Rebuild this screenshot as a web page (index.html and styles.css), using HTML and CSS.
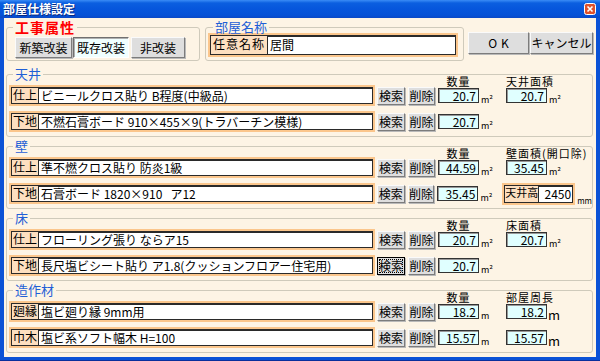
FILE: index.html
```html
<!DOCTYPE html>
<html lang="ja">
<head>
    <meta charset="UTF-8">
    <title>部屋仕様設定</title>
    <link rel="stylesheet" href="styles.css">
</head>
<body>
<div class="window">
    <div class="titlebar">
        <span class="title">部屋仕様設定</span>
        <span class="close">
            <svg width="12" height="12" viewBox="0 0 12 12">
                <rect x="0.5" y="0.5" width="11" height="11" rx="2" fill="#e0512a" stroke="#fff"/>
                <path d="M3.5 3.5 L8.5 8.5 M8.5 3.5 L3.5 8.5" stroke="#fff" stroke-width="1.6"/>
            </svg>
        </span>
    </div>
    <div class="client">
        <div class="top">
            <fieldset class="group kind">
                <legend class="red">工事属性</legend>
                <div class="kind-btns">
                    <button class="btn k1">新築改装</button>
                    <button class="btn k2 pressed">既存改装</button>
                    <button class="btn k3">非改装</button>
                </div>
            </fieldset>
            <fieldset class="group room">
                <legend>部屋名称</legend>
                <div class="item name"><span class="lbl">任意名称</span><span class="field">居間</span></div>
            </fieldset>
            <div class="dlg-btns">
                <button class="btn ok">OK</button>
                <button class="btn cancel">キャンセル</button>
            </div>
        </div>

        <fieldset class="group sec">
            <legend>天井</legend>
            <div class="heads"><span class="h1">数量</span><span class="h2">天井面積</span></div>
            <div class="row">
                <div class="item"><span class="lbl">仕上</span><span class="field">ビニールクロス貼り B程度(中級品)</span></div>
                <button class="btn sm">検索</button><button class="btn sm del">削除</button>
                <span class="val">20.7</span><span class="unit">m²</span>
                <span class="val">20.7</span><span class="unit">m²</span>
            </div>
            <div class="row">
                <div class="item"><span class="lbl">下地</span><span class="field">不燃石膏ボード 910×455×9(トラバーチン模様)</span></div>
                <button class="btn sm">検索</button><button class="btn sm del">削除</button>
                <span class="val">20.7</span><span class="unit">m²</span>
            </div>
        </fieldset>

        <fieldset class="group sec">
            <legend>壁</legend>
            <div class="heads"><span class="h1">数量</span><span class="h2">壁面積(開口除)</span></div>
            <div class="row">
                <div class="item"><span class="lbl">仕上</span><span class="field">準不燃クロス貼り 防炎1級</span></div>
                <button class="btn sm">検索</button><button class="btn sm del">削除</button>
                <span class="val">44.59</span><span class="unit">m²</span>
                <span class="val">35.45</span><span class="unit">m²</span>
            </div>
            <div class="row">
                <div class="item"><span class="lbl">下地</span><span class="field">石膏ボード 1820×910&nbsp;&nbsp; ア12</span></div>
                <button class="btn sm">検索</button><button class="btn sm del">削除</button>
                <span class="val">35.45</span><span class="unit">m²</span>
                <div class="item height"><span class="lbl">天井高</span><span class="field">2450</span></div>
                <span class="unit mm">mm</span>
            </div>
        </fieldset>

        <fieldset class="group sec">
            <legend>床</legend>
            <div class="heads"><span class="h1">数量</span><span class="h2">床面積</span></div>
            <div class="row">
                <div class="item"><span class="lbl">仕上</span><span class="field">フローリング張り ならア15</span></div>
                <button class="btn sm">検索</button><button class="btn sm del">削除</button>
                <span class="val">20.7</span><span class="unit">m²</span>
                <span class="val">20.7</span><span class="unit">m²</span>
            </div>
            <div class="row">
                <div class="item"><span class="lbl">下地</span><span class="field">長尺塩ビシート貼り ア1.8(クッションフロアー住宅用)</span></div>
                <button class="btn sm focus">検索</button><button class="btn sm del">削除</button>
                <span class="val">20.7</span><span class="unit">m²</span>
            </div>
        </fieldset>

        <fieldset class="group sec">
            <legend>造作材</legend>
            <div class="heads"><span class="h1">数量</span><span class="h2">部屋周長</span></div>
            <div class="row">
                <div class="item"><span class="lbl">廻縁</span><span class="field">塩ビ廻り縁 9mm用</span></div>
                <button class="btn sm">検索</button><button class="btn sm del">削除</button>
                <span class="val">18.2</span><span class="unit">m</span>
                <span class="val">18.2</span><span class="unit big">m</span>
            </div>
            <div class="row">
                <div class="item"><span class="lbl">巾木</span><span class="field">塩ビ系ソフト幅木 H=100</span></div>
                <button class="btn sm">検索</button><button class="btn sm del">削除</button>
                <span class="val">15.57</span><span class="unit">m</span>
                <span class="val">15.57</span><span class="unit big">m</span>
            </div>
        </fieldset>
    </div>
</div>
</body>
</html>
```

FILE: styles.css
```css
* {
    box-sizing: border-box;
}
body {
    margin: 0;
    font-family: "Noto Sans CJK JP", sans-serif;
    font-size: 12px;
    color: #000;
}
.window {
    width: 600px;
    height: 361px;
    display: flex;
    flex-direction: column;
    background: #0b52d6;
    border-bottom: 1px solid #0a2f9c;
}
.titlebar {
    height: 18px;
    display: flex;
    align-items: center;
    justify-content: space-between;
    padding: 0 4px 0 3px;
    background: linear-gradient(#3a8cf6 0, #0b5fe0 3px, #0656dc 50%, #0551d6 85%, #0a48c6 100%);
}
.title {
    color: #fff;
    font-weight: bold;
    font-size: 12px;
    line-height: 14px;
    text-shadow: 1px 1px 0 #0a2a80;
}
.close {
    display: flex;
    width: 12px;
    height: 12px;
}
.client {
    flex: 1;
    margin: 0 4px 3px;
    background: #fdf4e5;
}

/* group boxes */
fieldset.group {
    margin: 0;
    padding: 0;
    min-width: 0;
    border: 1px solid #cfcabb;
    border-radius: 3px;
}
legend {
    padding: 0 2px;
    font-size: 13px;
    line-height: 14px;
    color: #1f5fd6;
}
legend.red {
    color: #ff0000;
    font-weight: bold;
    font-size: 14px;
    letter-spacing: 1px;
}

/* buttons */
.btn {
    font: inherit;
    color: #000;
    margin: 0;
    padding: 0;
    background: #dedede;
    border: 1px solid;
    border-color: #fafafa #7c7c7c #7c7c7c #fafafa;
    box-shadow: 1px 1px 0 #b9b9b9;
    line-height: 14px;
}
.btn.pressed {
    background: #f0ffff;
    border-color: #707070 #ffffff #ffffff #707070;
    box-shadow: inset 1px 1px 0 #b0b0b0;
}
.btn.focus {
    border-color: #000;
    outline: 1px dotted #000;
    outline-offset: -3px;
}

/* top row */
.top {
    display: flex;
    align-items: flex-start;
    margin-top: 2px;
}
.kind {
    width: 194px;
    margin-left: 2px !important;
    padding: 3px 0 2px 8px !important;
}
.kind legend {
    margin-left: -2px;
}
.kind-btns {
    display: flex;
}
.kind-btns .btn {
    height: 21px;
}
.k1 { width: 57px; }
.k2 { width: 56px; margin-left: 1px !important; }
.k3 { width: 54px; margin-left: 2px !important; }
.room {
    width: 259px;
    margin-left: 5px !important;
    padding: 0 0 3px 2px !important;
}
.room legend {
    margin-left: 5px;
}
.dlg-btns {
    display: flex;
    margin: 12px 0 0 4px;
}
.dlg-btns .btn {
    height: 22px;
}
.ok {
    width: 61px;
    letter-spacing: 4px;
    padding-left: 4px;
}
.cancel {
    width: 63px;
    margin-left: 1px !important;
}

/* input with caption */
.item {
    display: flex;
    width: 366px;
    height: 21px;
    border: 2px solid #fbc68c;
    flex-shrink: 0;
}
.item .lbl {
    background: #fddfc0;
    border: 1px solid #2a2a2a;
    padding: 0 1px;
    line-height: 13px;
    white-space: nowrap;
}
.item .field {
    flex: 1;
    background: #fff;
    border: 1px solid #2a2a2a;
    border-left: none;
    border-top-width: 2px;
    padding: 0 2px;
    line-height: 13px;
    white-space: nowrap;
    overflow: hidden;
}
.item.name {
    width: 250px;
    height: 24px;
    margin-top: -1px;
}
.item.name .lbl {
    padding: 1px 2px 0;
    letter-spacing: 1px;
}
.item.name .field {
    padding-top: 1px;
}

/* sections */
.sec {
    margin: 6px 3px 0 2px !important;
    padding: 0 0 4px 2px !important;
}
.sec + .sec {
    margin-top: 2px !important;
}
.sec legend {
    margin-left: 4px;
}
.heads {
    display: flex;
    height: 11px;
    margin: -5px 0 -2px;
    font-size: 11px;
    line-height: 11px;
    letter-spacing: 1px;
}
.h1 {
    width: 41px;
    margin-left: 429px;
    text-align: center;
}
.h2 {
    margin-left: 26px;
    padding-left: 1px;
}
.row {
    display: flex;
    align-items: center;
    height: 21px;
}
.row + .row {
    margin-top: 5px;
}
.btn.sm {
    width: 28px;
    height: 18px;
    margin-left: 2px;
}
.btn.sm.del {
    width: 27px;
    margin-left: 3px;
}
.val {
    width: 41px;
    height: 15px;
    margin-left: 3px;
    background: #e0ffff;
    border: 1px solid #333;
    box-shadow: inset 1px 1px 0 #999;
    text-align: right;
    padding-right: 2px;
    line-height: 13px;
    flex-shrink: 0;
}
.unit {
    width: 24px;
    padding-left: 2px;
    margin-top: 8px;
    font-size: 9px;
    line-height: 9px;
}
.unit.big {
    font-size: 13px;
    line-height: 12px;
    margin-top: 6px;
    padding-left: 1px;
}
.item.height {
    width: 73px;
    height: 22px;
}
.item.height .lbl {
    padding: 0;
    font-size: 11px;
}
.item.height .field {
    text-align: right;
    padding: 0 1px;
}
.unit.mm {
    width: auto;
    margin-top: 14px;
    font-size: 8px;
}
```
